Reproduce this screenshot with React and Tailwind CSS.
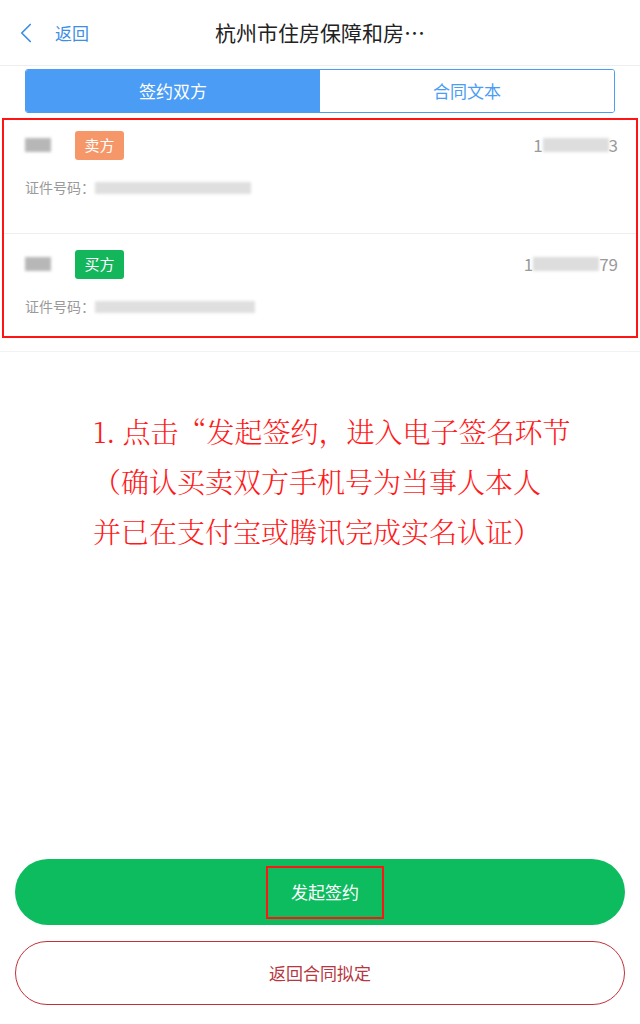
import { ChevronLeft } from 'lucide-react';

const sans = { fontFamily: '"Noto Sans CJK SC", "Noto Sans", sans-serif' };

function Blur({ w, h = 'h-[13px]', tone = 'bg-[#c8c8c8]' }) {
  return <span className={`inline-block ${w} ${h} ${tone} blur-[1.5px] opacity-70`} />;
}

const parties = [
  { role: '卖方', tag: 'bg-[#f6976a]', tail: '3', idW: 'w-[156px]' },
  { role: '买方', tag: 'bg-[#14b65c]', tail: '79', idW: 'w-[160px]' },
];

export default function App() {
  return (
    <div className="w-[640px] h-[1024px] bg-white flex flex-col" style={sans}>
      {/* Header */}
      <div className="h-[66px] flex items-center relative border-b border-[#eeeeee]">
        <div className="flex items-center pl-[9px] gap-[12px] text-[#3e8fe3]">
          <ChevronLeft size={34} strokeWidth={1.2} />
          <span className="text-[17px]">返回</span>
        </div>
        <div className="absolute left-0 right-0 text-center text-[21px] text-[#222] pointer-events-none">
          杭州市住房保障和房…
        </div>
      </div>

      {/* Tabs */}
      <div className="px-[25px] pt-[3px]">
        <div className="flex h-[44px] rounded-[3px] border border-[#4a9cf5] overflow-hidden text-[17px]">
          <div className="flex-1 bg-[#4a9cf5] text-white flex items-center justify-center">签约双方</div>
          <div className="flex-1 bg-white text-[#4a9cf5] flex items-center justify-center">合同文本</div>
        </div>
      </div>

      {/* Parties */}
      <div className="mx-[2px] mt-[5px] border-2 border-[#ff1414] h-[220px] flex flex-col">
        {parties.map((p, i) => (
          <div
            key={p.role}
            className={`pl-[21px] pr-[18px] flex flex-col ${i === 0 ? 'pt-[10px] h-[114px] border-b border-[#eeeeee]' : 'pt-[15px]'}`}
          >
            <div className="flex items-center h-[30px]">
              <Blur w="w-[26px]" h="h-[14px]" tone="bg-[#9a9a9a]" />
              <span className={`ml-[24px] ${p.tag} text-white text-[15px] rounded-[3px] w-[49px] h-[29px] flex items-center justify-center`}>
                {p.role}
              </span>
              <div className="ml-auto flex items-center text-[#9a9a9a] text-[17px]">
                <span>1</span>
                <Blur w="w-[66px]" h="h-[14px]" tone="bg-[#cfcfcf]" />
                <span>{p.tail}</span>
              </div>
            </div>
            <div className="flex items-center mt-[17px] text-[14px] text-[#9a9a9a]">
              <span>证件号码：</span>
              <Blur w={p.idW} h="h-[12px]" tone="bg-[#d2d2d2]" />
            </div>
          </div>
        ))}
      </div>
      <div className="h-[14px] border-b border-[#f2f2f2]" />

      {/* Annotation */}
      <div
        className="pl-[93px] pt-[54px] text-[28px] leading-[50px] text-[#ff1a1a]"
        style={{ fontFamily: '"Noto Serif CJK SC", "Liberation Serif", "Noto Sans CJK SC", serif', fontWeight: 300 }}
      >
        <p>1. 点击“发起签约，进入电子签名环节</p>
        <p>（确认买卖双方手机号为当事人本人</p>
        <p>并已在支付宝或腾讯完成实名认证）</p>
      </div>

      {/* Actions */}
      <div className="mt-auto px-[15px] pb-[19px] flex flex-col gap-[16px]">
        <button className="h-[66px] rounded-full bg-[#0cbc5e] flex items-center justify-center">
          <span className="ml-[10px] border-2 border-[#ff1414] w-[118px] h-[53px] flex items-center justify-center text-white text-[17px]">
            发起签约
          </span>
        </button>
        <button className="h-[64px] rounded-full border-[1.5px] border-[#c4303a] bg-white text-[#b73640] text-[17px]">
          返回合同拟定
        </button>
      </div>
    </div>
  );
}
